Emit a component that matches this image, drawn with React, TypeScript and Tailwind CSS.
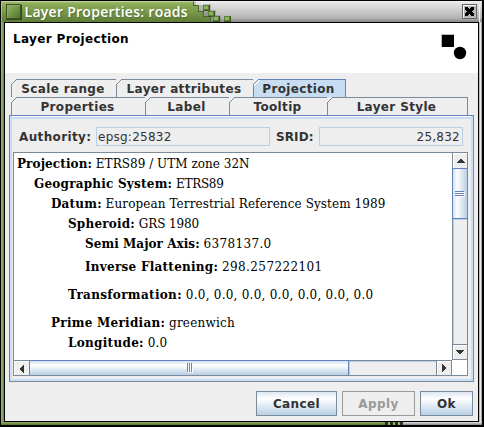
import React from "react";

const SANS = "font-['DejaVu_Sans',sans-serif]";
const STEEL = "border-[#7a8a99]";

function Corner({ active = false }: { active?: boolean }) {
  return (
    <svg className="absolute -left-px -top-px" width="7" height="7" shapeRendering="crispEdges">
      <path d="M0 0H6L0 6Z" fill="#eeeeee" />
      <path d="M0 6L6 0" stroke={active ? "#6382bf" : "#7a8a99"} fill="none" />
      {active && <path d="M1 6.5L6.5 1" stroke="#fff" />}
    </svg>
  );
}

function Tab({ label, width, active = false, last = false }: {
  label: string; width: string; active?: boolean; last?: boolean;
}) {
  return (
    <div
      className={`relative flex h-[18px] items-center justify-center border-l border-t pr-[2px] ${width} ${
        active ? "border-[#6382bf] bg-[#c8ddf2]" : `${STEEL} bg-[#eeeeee]`
      } ${last ? "border-r" : ""}`}
    >
      <Corner active={active} />
      <span className="whitespace-nowrap text-[12px] font-bold leading-[18px] tracking-[0.35px] text-[#333333]">{label}</span>
    </div>
  );
}

const rows = [
  { k: "Projection:", v: "ETRS89 / UTM zone 32N", pad: "pl-[3px]", ks: "tracking-[0.1px]", vs: "tracking-[0.03px]" },
  { k: "Geographic System:", v: "ETRS89", pad: "pl-[20px]", ks: "tracking-[0.22px]", vs: "tracking-[-0.3px]" },
  { k: "Datum:", v: "European Terrestrial Reference System 1989", pad: "pl-[37px]", ks: "tracking-[0.2px]", vs: "tracking-[0.1px]" },
  { k: "Spheroid:", v: "GRS 1980", pad: "pl-[54px]", ks: "tracking-[0.2px]", vs: "tracking-[-0.1px]" },
  { k: "Semi Major Axis:", v: "6378137.0", pad: "pl-[71px]", ks: "tracking-[0.05px]", vs: "tracking-[0.35px]" },
  { k: "Inverse Flattening:", v: "298.257222101", pad: "pl-[71px] mt-[3px]", ks: "tracking-[0.26px]", vs: "tracking-[0.4px]" },
  { k: "Transformation:", v: "0.0, 0.0, 0.0, 0.0, 0.0, 0.0, 0.0", pad: "pl-[54px] mt-[8px]", ks: "tracking-[0.34px]", vs: "tracking-[0.25px]" },
  { k: "Prime Meridian:", v: "greenwich", pad: "pl-[37px] mt-[8px]", ks: "tracking-[0.27px]", vs: "tracking-[0.22px]" },
  { k: "Longitude:", v: "0.0", pad: "pl-[54px]", ks: "tracking-[0.3px]", vs: "tracking-[0.25px]" },
];

function Arrow({ dir }: { dir: "up" | "down" | "left" | "right" }) {
  const d = {
    up: "M3 4h2v1h1v1h1v1h1v1H0V7h1V6h1V5h1z",
    down: "M0 4h8v1H7v1H6v1H5v1H3V7H2V6H1V5H0z",
    left: "M4 0v8H3V7H2V6H1V5H0V3h1V2h1V1h1V0z",
    right: "M0 0h1v1h1v1h1v1h1v2H3v1H2v1H1v1H0z",
  }[dir];
  const vertical = dir === "up" || dir === "down";
  return (
    <svg width={vertical ? 8 : 4} height="8" viewBox={vertical ? "0 2 8 8" : "0 0 4 8"} shapeRendering="crispEdges">
      <path d={d} fill="#333" />
    </svg>
  );
}

function TitleBar() {
  const blocks = [
    [202, 4], [207, 10], [212, 15], [223, 15],
  ];
  return (
    <div className="relative flex h-[21px] items-center">
      <svg className="absolute left-0 top-0" width="481" height="21" shapeRendering="crispEdges">
        <defs>
          <linearGradient id="silver" x2="0" y2="1">
            <stop offset="0" stopColor="#eeeaee" />
            <stop offset="0.2" stopColor="#dddddd" />
            <stop offset="0.8" stopColor="#b5b5b5" />
            <stop offset="1" stopColor="#858585" />
          </linearGradient>
          <linearGradient id="green" x2="0" y2="1">
            <stop offset="0" stopColor="#a5bd78" />
            <stop offset="0.15" stopColor="#8dac58" />
            <stop offset="1" stopColor="#5e7d36" />
          </linearGradient>
          <linearGradient id="block" x2="1" y2="1">
            <stop offset="0" stopColor="#9bbc68" />
            <stop offset="1" stopColor="#4d702b" />
          </linearGradient>
        </defs>
        <rect width="481" height="21" fill="url(#silver)" />
        <path d="M193 0h2v4h7v-1h8v6h5v5h5v7h-12V15h-6v-5h-5V4h-4z" fill="#666" opacity=".3" />
        <path d="M0 0H192V4H197V10H202V15H209V21H0Z" fill="url(#green)" />
        <path d="M192.5 0V4.5H197.5V10.5H202.5V15.5H209.5V21" fill="none" stroke="#4a6630" />
        {blocks.map(([x, y]) => (
          <g key={x}>
            <rect x={x} y={y} width="7" height="6" fill="#38531f" />
            <rect x={x} y={y} width="6" height="5" fill="#5c8136" />
            <rect x={x + 1} y={y + 1} width="4" height="3" fill="#8fb35c" />
          </g>
        ))}
        <rect x="204" y="11" width="3" height="4" fill="#92928e" />
        <path d="M0 .5H481M.5 0V21" stroke="#fff" opacity=".35" />
        <rect x="5.5" y="3.5" width="14" height="14" fill="url(#block)" stroke="#3c5423" />
        <path d="M6.5 17V4.5H19" stroke="#91ac68" fill="none" />
        <path d="M5 18.5H20.5V4" stroke="#2e4519" fill="none" />
        <path d="M478.5 3V21" stroke="#efefef" />
      </svg>
      <span className="relative ml-[23.5px] flex-1 whitespace-nowrap font-['Open_Sans','Noto_Sans',sans-serif] text-[14px] font-semibold leading-[20px] tracking-[0.28px] text-white [text-shadow:1px_1px_1px_#55723a]">
        Layer Properties: roads
      </span>
      <svg className="relative mr-[5px]" width="15" height="15" shapeRendering="crispEdges">
        <rect width="15" height="15" fill="#666" />
        <rect x="1" y="1" width="13" height="13" fill="#f4f4f4" />
        <rect x="2" y="2" width="12" height="12" fill="#b8b8b8" />
        <path d="M3 3h3v1h1v1h1V4h1V3h3v3h-1v1h-1v1h1v1h1v3H9v-1H8v-1H7v1H6v1H3V9h1V8h1V7H4V6H3z" fill="#000" />
      </svg>
    </div>
  );
}

export default function App() {
  return (
    <div className={`h-[427px] w-[484px] overflow-hidden bg-black pl-px pt-px ${SANS}`}>
      <div className="h-[424px] w-[481px]">
        <TitleBar />
        <div className="flex h-[400px]">
          <div className="w-[3px] bg-linear-to-r from-[#a3bd73] to-[#658743]" />
          <main className="h-[400px] w-[475px] border border-black bg-[#eeeeee]">
            <header className="flex h-[50px] justify-between bg-white">
              <h1 className="ml-[8px] mt-[6px] text-[12px] font-bold leading-[20px] tracking-[0.35px] text-black">Layer Projection</h1>
              <svg className="mr-[9px] mt-[11px]" width="28" height="28">
                <rect x="1" y="1" width="12" height="12" fill="#000" />
                <path d="M.5 13V.5H13" stroke="#bbb" fill="none" />
                <circle cx="19" cy="19" r="6.2" fill="#000" />
              </svg>
            </header>

            <nav className="ml-[6px] mt-[6px]">
              <div className="flex">
                <Tab label="Scale range" width="w-[105px]" />
                <Tab label="Layer attributes" width="w-[137px]" />
                <Tab label="Projection" width="w-[93px]" active last />
              </div>
              <div className="flex">
                <Tab label="Properties" width="w-[134px]" />
                <Tab label="Label" width="w-[84px]" />
                <Tab label="Tooltip" width="w-[98px]" />
                <Tab label="Layer Style" width="w-[141px]" last />
              </div>
            </nav>

            <section className="ml-[4px] h-[267px] w-[465px] border border-b-[#7a8a99] border-l-[#6382bf] border-r-[#7a8a99] border-t-[#6382bf]">
              <div className="h-[265px] border-2 border-t-0 border-[#c8ddf2]">
                <div className="h-[3px] border-t border-white bg-[#c8ddf2]" />
                <div className="ml-[7px] mt-[8px] flex h-[19px] items-center text-[12px] leading-[18px] text-[#333333]">
                  <label className="w-[77px] whitespace-nowrap font-bold tracking-[0.36px]">Authority:</label>
                  <div className="h-[19px] w-[174px] border border-[#b8cfe5] pl-px tracking-[0.25px]">epsg:25832</div>
                  <label className="ml-[6px] w-[43px] font-bold tracking-[0.1px]">SRID:</label>
                  <div className="h-[19px] w-[144px] border border-[#b8cfe5] pr-[2px] text-right tracking-[0.25px]">25,832</div>
                </div>

                <div className={`ml-px mt-[6px] grid h-[224px] w-[455px] grid-cols-[438px_15px] grid-rows-[207px_15px] border ${STEEL}`}>
                  <article className="h-[207px] overflow-hidden bg-white pt-px font-['DejaVu_Serif',serif] text-[12px] text-black">
                    {rows.map((r) => (
                      <p key={r.k} className={`h-[20px] whitespace-nowrap leading-[20px] ${r.pad}`}>
                        <b className={r.ks}>{r.k}</b> <span className={r.vs}>{r.v}</span>
                      </p>
                    ))}
                  </article>
                  <div className={`flex flex-col border-l ${STEEL}`}>
                    <div className="flex h-[15px] items-center justify-center border-l border-t border-white">
                      <Arrow dir="up" />
                    </div>
                    <div className="-ml-px flex h-[51px] items-center justify-center border-y border-l border-[#6382bf] bg-linear-to-r from-[#d0e0f0] via-white via-30% to-[#b8cfe5]">
                      <svg width="10" height="6" shapeRendering="crispEdges">
                        <path d="M0 .5H9M0 2.5H9M0 4.5H9" stroke="#6382bf" />
                        <path d="M1 1.5H10M1 3.5H10M1 5.5H10" stroke="#fff" />
                      </svg>
                    </div>
                    <div className="flex-1 border-l border-t border-[#b8cfe5]" />
                    <div className={`flex h-[16px] items-center justify-center border-y ${STEEL} shadow-[inset_1px_1px_#fff]`}>
                      <Arrow dir="down" />
                    </div>
                  </div>
                  <div className={`flex border-t ${STEEL}`}>
                    <div className="flex w-[15px] items-center justify-center border-l border-t border-white">
                      <Arrow dir="left" />
                    </div>
                    <div className="-mt-px flex h-[15px] w-[320px] items-center justify-center border-x border-t border-[#6382bf] bg-linear-to-b from-[#d0e0f0] via-white via-30% to-[#b8cfe5] pl-[2px]">
                      <svg width="6" height="10" shapeRendering="crispEdges">
                        <path d="M.5 0V9M2.5 0V9M4.5 0V9" stroke="#6382bf" />
                        <path d="M1.5 1V10M3.5 1V10M5.5 1V10" stroke="#fff" />
                      </svg>
                    </div>
                    <div className="flex-1 border-l border-t border-[#b8cfe5]" />
                    <div className={`flex w-[16px] items-center justify-center border-x ${STEEL} shadow-[inset_1px_1px_#fff]`}>
                      <Arrow dir="right" />
                    </div>
                  </div>
                  <div className="bg-white" />
                </div>
              </div>
            </section>

            <footer className="mr-[5px] mt-[9px] flex justify-end gap-[5px] text-[12px] font-bold leading-[24px] tracking-[0.4px]">
              <button className={`h-[25px] w-[81px] border ${STEEL} bg-linear-to-b from-[#dde8f3] via-white via-30% to-[#b8cfe5] text-[#333333]`}>Cancel</button>
              <button className="h-[25px] w-[73px] border border-[#999999] text-[#999999]">Apply</button>
              <button className={`h-[25px] w-[53px] border ${STEEL} bg-linear-to-b from-[#dde8f3] via-white via-30% to-[#b8cfe5] text-[#333333]`}>Ok</button>
            </footer>
          </main>
          <div className="w-[3px] bg-linear-to-r from-[#aaa] via-[#e8e8e8] to-[#858585]" />
        </div>
        <div className="flex h-[3px]">
          <div className="w-[384px] bg-linear-to-b from-[#91ae61] to-[#587432]" />
          <svg width="18" height="3" shapeRendering="crispEdges">
            <rect width="18" height="3" fill="#263619" />
            <path d="M3 0h2v3H3zM8 0h2v3H8zM13 0h2v3h-2z" fill="#9ab37c" />
          </svg>
          <div className="flex-1 bg-linear-to-b from-[#e5e5e5] to-[#858585]" />
        </div>
      </div>
    </div>
  );
}
